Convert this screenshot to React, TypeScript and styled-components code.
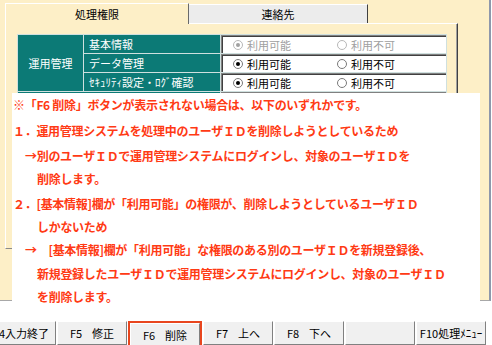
import React from "react";
import styled, { createGlobalStyle } from "styled-components";

const GlobalStyle = createGlobalStyle`
  html, body {
    margin: 0;
    padding: 0;
    background: #ffffff;
  }
  body {
    font-family: "Noto Sans CJK JP", "Noto Sans", sans-serif;
  }
`;

const cream = "#fdefc7";
const teal = "#0c7a76";

const Screen = styled.div`
  position: relative;
  width: 492px;
  height: 345px;
  overflow: hidden;
  display: flex;
  flex-direction: column;
`;

const Window = styled.div`
  box-sizing: border-box;
  width: 491px;
  height: 301px;
  background: ${cream};
  border-right: 2px solid #8e97ab;
  border-bottom: 1px solid #a8a8a8;
  padding: 3px 0 0 5px;
`;

const TabStrip = styled.div`
  display: flex;
  align-items: flex-start;
  height: 20px;
`;

const Tab = styled.div<{ $active?: boolean }>`
  box-sizing: border-box;
  position: relative;
  z-index: 1;
  width: ${(p) => (p.$active ? 184 : 179)}px;
  height: ${(p) => (p.$active ? 21 : 19)}px;
  margin-top: ${(p) => (p.$active ? 0 : 1)}px;
  background: ${(p) => (p.$active ? cream : "#ececec")};
  border-top: 1px solid #ffffff;
  border-left: ${(p) => (p.$active ? "1px solid #ffffff" : "none")};
  border-right: 1px solid ${(p) => (p.$active ? "#6a6a6a" : "#404040")};
  display: flex;
  align-items: center;
  justify-content: center;
  font-size: 11px;
  color: #000;
`;

const Panel = styled.div`
  box-sizing: border-box;
  width: 453px;
  height: 226px;
  border-top: 1px solid #ffffff;
  border-left: 1px solid #ffffff;
  border-right: 1px solid #404040;
  border-bottom: 1px solid #8a8a8a;
  box-shadow: inset -1px 0 0 #a0a0a0;
  padding: 10px 0 0 11px;
`;

const PermTable = styled.div`
  display: grid;
  grid-template-columns: 65px 136px 225px;
  grid-template-rows: repeat(4, 18px);
  gap: 1px;
  width: fit-content;
  background: #cfe0df;
  border: 1px solid #cfe0df;
`;

const TealCell = styled.div<{ $center?: boolean; $rows?: number; $cols?: number }>`
  background: ${teal};
  color: #ffffff;
  font-size: 11px;
  display: flex;
  align-items: center;
  justify-content: ${(p) => (p.$center ? "center" : "flex-start")};
  padding-left: ${(p) => (p.$center ? 0 : 5)}px;
  grid-row: span ${(p) => p.$rows ?? 1};
  grid-column: span ${(p) => p.$cols ?? 1};
  white-space: nowrap;
`;

const RadioCell = styled.div`
  box-sizing: border-box;
  background: #ffffff;
  border-top: 1px solid #808080;
  border-left: 1px solid #808080;
  box-shadow: inset 1px 1px 0 #404040;
  display: flex;
  align-items: center;
  padding-left: 11px;
`;

const RadioItem = styled.label<{ $disabled?: boolean }>`
  display: flex;
  align-items: center;
  gap: 4px;
  width: 104px;
  font-size: 11px;
  color: ${(p) => (p.$disabled ? "#a0a0a0" : "#000000")};
`;

const RadioMark = styled.span<{ $checked?: boolean; $disabled?: boolean }>`
  box-sizing: border-box;
  width: 10px;
  height: 10px;
  border-radius: 50%;
  border: 1px solid ${(p) => (p.$disabled ? "#b8b8b8" : "#7a7a7a")};
  background: #ffffff;
  display: flex;
  align-items: center;
  justify-content: center;
  &::after {
    content: "";
    display: ${(p) => (p.$checked ? "block" : "none")};
    width: 4px;
    height: 4px;
    border-radius: 50%;
    background: ${(p) => (p.$disabled ? "#a0a0a0" : "#000000")};
  }
`;

const Note = styled.div`
  position: absolute;
  left: 12px;
  top: 93px;
  width: 468px;
  height: 228px;
  background: #ffffff;
  color: #ff3a14;
  font-weight: bold;
  font-size: 12px;
  letter-spacing: -0.3px;
`;

const NoteLine = styled.div<{ $indent: number; $gap?: number }>`
  line-height: 23px;
  white-space: nowrap;
  padding-left: ${(p) => p.$indent}px;
  margin-top: ${(p) => p.$gap ?? 0}px;
`;

const FuncBar = styled.div`
  display: flex;
  gap: 1px;
  height: 24px;
  margin-top: 20px;
  margin-left: -14px;
`;

const FuncKey = styled.div`
  box-sizing: border-box;
  flex: 0 0 70px;
  height: 24px;
  background: #f0f0f0;
  border-top: 1px solid #ffffff;
  border-left: 1px solid #ffffff;
  border-right: 1px solid #808080;
  border-bottom: 1px solid #808080;
  display: flex;
  align-items: center;
  justify-content: center;
  gap: 10px;
  font-size: 11px;
  color: #000;
  white-space: nowrap;
`;

const KeyMark = styled.div`
  box-sizing: border-box;
  flex: 0 0 74px;
  display: flex;
  border: 2px solid #e8461e;
  & > ${FuncKey} {
    flex: 1 1 auto;
  }
`;

type Row = { label: string; disabled?: boolean };

const rows: Row[] = [
  { label: "基本情報", disabled: true },
  { label: "データ管理" },
  { label: "ｾｷｭﾘﾃｨ設定・ﾛｸﾞ確認" },
];

const RadioPair = ({ disabled }: { disabled?: boolean }) => (
  <RadioCell>
    <RadioItem $disabled={disabled}>
      <RadioMark $checked $disabled={disabled} />
      利用可能
    </RadioItem>
    <RadioItem $disabled={disabled}>
      <RadioMark $disabled={disabled} />
      利用不可
    </RadioItem>
  </RadioCell>
);

export default function App() {
  return (
    <Screen>
      <GlobalStyle />
      <Window>
        <TabStrip>
          <Tab $active>処理権限</Tab>
          <Tab>連絡先</Tab>
        </TabStrip>
        <Panel>
          <PermTable>
            <TealCell $center $rows={3}>運用管理</TealCell>
            {rows.map((r) => (
              <React.Fragment key={r.label}>
                <TealCell>{r.label}</TealCell>
                <RadioPair disabled={r.disabled} />
              </React.Fragment>
            ))}
            <TealCell $cols={2} />
            <RadioCell />
          </PermTable>
        </Panel>
      </Window>

      <Note>
        <NoteLine $indent={1}>※「F6 削除」ボタンが表示されない場合は、以下のいずれかです。</NoteLine>
        <NoteLine $indent={1} $gap={3}>１．運用管理システムを処理中のユーザＩＤを削除しようとしているため</NoteLine>
        <NoteLine $indent={13} $gap={2}>→別のユーザＩＤで運用管理システムにログインし、対象のユーザＩＤを</NoteLine>
        <NoteLine $indent={25}>削除します。</NoteLine>
        <NoteLine $indent={1} $gap={2}>２．[基本情報]欄が「利用可能」の権限が、削除しようとしているユーザＩＤ</NoteLine>
        <NoteLine $indent={25}>しかないため</NoteLine>
        <NoteLine $indent={13}>→　[基本情報]欄が「利用可能」な権限のある別のユーザＩＤを新規登録後、</NoteLine>
        <NoteLine $indent={25} $gap={1}>新規登録したユーザＩＤで運用管理システムにログインし、対象のユーザＩＤ</NoteLine>
        <NoteLine $indent={25}>を削除します。</NoteLine>
      </Note>

      <FuncBar>
        <FuncKey>F4入力終了</FuncKey>
        <FuncKey><span>F5</span><span>修正</span></FuncKey>
        <KeyMark>
          <FuncKey><span>F6</span><span>削除</span></FuncKey>
        </KeyMark>
        <FuncKey><span>F7</span><span>上へ</span></FuncKey>
        <FuncKey><span>F8</span><span>下へ</span></FuncKey>
        <FuncKey />
        <FuncKey>F10処理ﾒﾆｭｰ</FuncKey>
      </FuncBar>
    </Screen>
  );
}
